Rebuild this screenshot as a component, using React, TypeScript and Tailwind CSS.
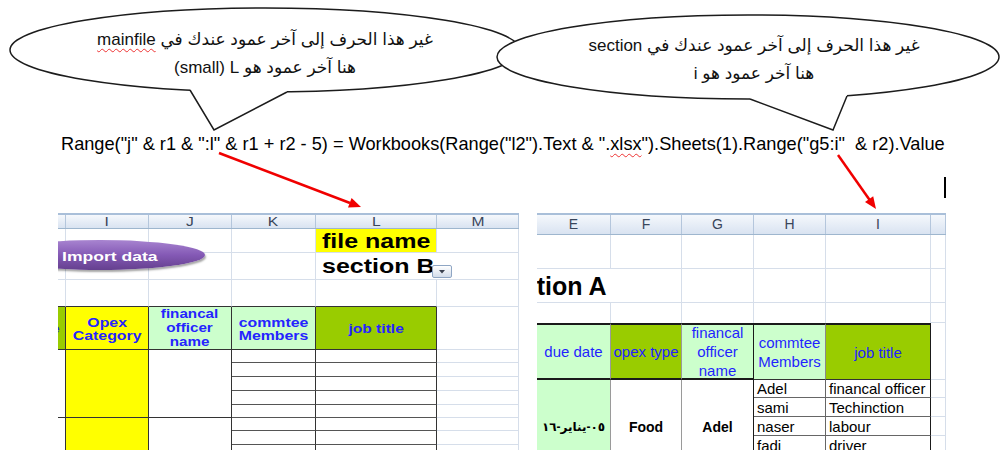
import React from 'react';

const SANS = "font-['Liberation_Sans','DejaVu_Sans',sans-serif]";

function Bubbles() {
  return (
    <svg className="absolute left-0 top-0" width="1000" height="135" viewBox="0 0 1000 135">
      <ellipse cx="265" cy="50" rx="255" ry="42" fill="#fff" stroke="#1c1c1c" strokeWidth="1.5" />
      <polygon points="190,84 190,90 214,130 287,92 287,84" fill="#fff" />
      <polyline points="190,90 214,130 287,92" fill="none" stroke="#1c1c1c" strokeWidth="1.5" />
      <ellipse cx="748" cy="57" rx="251" ry="42" fill="#fff" stroke="#1c1c1c" strokeWidth="1.5" />
      <polygon points="750,92 750,99 833,130 847,96 847,90" fill="#fff" />
      <polyline points="750,99 833,130 847,96" fill="none" stroke="#1c1c1c" strokeWidth="1.5" />
    </svg>
  );
}

function Arrows() {
  return (
    <svg className="pointer-events-none absolute left-0 top-0" width="1000" height="450" viewBox="0 0 1000 450">
      <line x1="219" y1="153" x2="350" y2="203" stroke="#f00000" strokeWidth="2.5" />
      <polygon points="361,207 348,207.4 351.6,198" fill="#f00000" />
      <line x1="838" y1="155" x2="869.5" y2="199.8" stroke="#f00000" strokeWidth="2.5" />
      <polygon points="876,209 865,202.1 873.2,196.3" fill="#f00000" />
    </svg>
  );
}

// left sheet: partial H, I, J, K, L, M
const LW = ['w-[8px]', 'w-[83px]', 'w-[83px]', 'w-[84px]', 'w-[121px]', 'w-[82px]'];
const LETTERS_L = ['', 'I', 'J', 'K', 'L', 'M'];
// right sheet: E, F, G, H, I, partial J
const RW = ['w-[74px]', 'w-[71px]', 'w-[72px]', 'w-[72px]', 'w-[105px]', 'w-[15px]'];
const LETTERS_R = ['E', 'F', 'G', 'H', 'I', ''];

const grid = 'border-r border-b border-[#d6deea]';
const headCell =
  'flex shrink-0 items-center justify-center border-r border-[#b4c6dc] bg-linear-to-b from-[#f5f8fc] to-[#d9e3f1] text-[#39455a]';

function LeftSheet() {
  return (
    <div className={`relative h-[237px] w-[461px] shrink-0 overflow-hidden ${SANS}`}>
      {/* column letters */}
      <div className="flex h-[16px] border-t-2 border-b border-t-[#a9bfd9] border-b-[#9eb6ce]">
        {LW.map((w, i) => (
          <div key={i} className={`${headCell} ${w} text-[12px]`}>
            <span className="inline-block scale-x-[1.3]">{LETTERS_L[i]}</span>
          </div>
        ))}
      </div>

      {/* row 1 */}
      <div className="flex h-[24px]">
        <div className={`${LW[0]} ${grid}`} />
        <div className={`${LW[1]} ${grid}`} />
        <div className={`${LW[2]} ${grid}`} />
        <div className={`${LW[3]} ${grid}`} />
        <div className={`${LW[4]} flex items-center border-r border-b border-[#d6deea] bg-[#ffff00] pl-[6px]`}>
          <span className="inline-block origin-left scale-x-[1.25] whitespace-nowrap text-[20px] font-bold text-black">
            file name
          </span>
        </div>
        <div className={`${LW[5]} ${grid}`} />
      </div>

      {/* row 2 */}
      <div className="flex h-[27px]">
        <div className={`${LW[0]} ${grid}`} />
        <div className={`${LW[1]} ${grid}`} />
        <div className={`${LW[2]} ${grid}`} />
        <div className={`${LW[3]} ${grid}`} />
        <div className={`${LW[4]} flex items-center border-b border-[#d6deea] pl-[6px]`}>
          <span className="inline-block origin-left scale-x-[1.25] whitespace-nowrap text-[20px] font-bold text-black">
            section B
          </span>
        </div>
        <div className={`${LW[5]} ${grid}`} />
      </div>

      {/* row 3 */}
      <div className="flex h-[27px]">
        <div className={`${LW[0]} border-r border-b border-r-[#d6deea] border-b-[#333]`} />
        <div className={`${LW[1]} border-r border-b border-r-[#d6deea] border-b-[#333]`} />
        <div className={`${LW[2]} border-r border-b border-r-[#d6deea] border-b-[#333]`} />
        <div className={`${LW[3]} border-r border-b border-r-[#d6deea] border-b-[#333]`} />
        <div className={`${LW[4]} border-r border-b border-r-[#d6deea] border-b-[#333]`} />
        <div className={`${LW[5]} ${grid}`} />
      </div>

      {/* table header */}
      <div className="flex h-[43px] text-[13px] font-bold leading-[13px] text-[#2424ff]">
        <div className={`${LW[0]} flex items-center overflow-hidden border-r border-b border-[#333] bg-[#99cc00]`}>
          <div className="-ml-[76px] w-[83px] shrink-0 text-center">
            <span className="inline-block scale-x-[1.2] whitespace-nowrap">opex type</span>
          </div>
        </div>
        <div className={`${LW[1]} flex items-center justify-center border-r border-b border-[#333] bg-[#ffff00] pt-[2px]`}>
          <div className="scale-x-[1.22] text-center">
            Opex
            <br />
            Category
          </div>
        </div>
        <div className={`${LW[2]} flex items-center justify-center border-r border-b border-[#333] bg-[#ccffcc] leading-[14px]`}>
          <div className="scale-x-[1.17] text-center">
            financal
            <br />
            officer
            <br />
            name
          </div>
        </div>
        <div className={`${LW[3]} flex items-center justify-center border-r border-b border-[#333] bg-[#ccffcc] pt-[2px]`}>
          <div className="scale-x-[1.22] text-center">
            commtee
            <br />
            Members
          </div>
        </div>
        <div className={`${LW[4]} flex items-center justify-center border-r border-b border-[#333] bg-[#99cc00]`}>
          <div className="scale-x-[1.2] text-center">job title</div>
        </div>
        <div className={`${LW[5]} ${grid}`} />
      </div>

      {/* data groups */}
      {[0, 1].map((g) => (
        <div key={g} className="flex h-[68px]">
          <div className={`${LW[0]} border-r border-b border-[#333]`} />
          <div className={`${LW[1]} border-r border-b border-[#333] bg-[#ffff00]`} />
          <div className={`${LW[2]} border-r border-b border-[#333]`} />
          <div className={`${LW[3]} flex flex-col`}>
            {['h-[13px]', 'h-[14px]', 'h-[14px]', 'h-[14px]', 'h-[13px]'].map((h, i) => (
              <div key={i} className={`${h} border-r border-b border-r-[#333] border-b-[#555]`} />
            ))}
          </div>
          <div className={`${LW[4]} flex flex-col`}>
            {['h-[13px]', 'h-[14px]', 'h-[14px]', 'h-[14px]', 'h-[13px]'].map((h, i) => (
              <div key={i} className={`${h} border-r border-b border-r-[#333] border-b-[#555]`} />
            ))}
          </div>
          <div className={`${LW[5]} flex flex-col`}>
            {['h-[13px]', 'h-[14px]', 'h-[14px]', 'h-[14px]', 'h-[13px]'].map((h, i) => (
              <div key={i} className={`${h} border-r border-b border-[#d6deea]`} />
            ))}
          </div>
        </div>
      ))}

      {/* Import data shape */}
      <div className="absolute left-[-63px] top-[27px] flex h-[30px] w-[210px] items-center rounded-[50%] bg-linear-to-b from-[#a884d0] via-[#8459b5] to-[#65408f] pl-[67px] pt-[3px] shadow-[1px_2px_2px_rgba(0,0,0,0.35)]">
        <span className="inline-block origin-left scale-x-[1.35] whitespace-nowrap text-[13px] font-semibold text-white">
          Import data
        </span>
      </div>

      {/* dropdown button */}
      <div className="absolute left-[374px] top-[52px] flex h-[13px] w-[20px] items-center justify-center rounded-[2px] border border-[#8fa6c4] bg-linear-to-b from-[#ffffff] to-[#d3ddeb]">
        <svg width="6" height="4" viewBox="0 0 6 4">
          <polygon points="0,0 6,0 3,3.5" fill="#3a4150" />
        </svg>
      </div>
    </div>
  );
}

function RightSheet() {
  const dataRows = ['h-[18px]', 'h-[19px]', 'h-[19px]', 'h-[19px]', 'h-[19px]'];
  const names = ['Adel', 'sami', 'naser', 'fadi', ''];
  const jobs = ['financal officer', 'Techinction', 'labour', 'driver', ''];
  return (
    <div className={`relative h-[237px] w-[409px] shrink-0 overflow-hidden ${SANS}`}>
      {/* column letters */}
      <div className="flex h-[22px] border-t-2 border-b border-t-[#a9bfd9] border-b-[#9eb6ce]">
        {RW.map((w, i) => (
          <div key={i} className={`${headCell} ${w} text-[14px]`}>
            {LETTERS_R[i]}
          </div>
        ))}
      </div>

      {/* row 1 */}
      <div className="flex h-[34px]">
        {RW.map((w, i) => (
          <div key={i} className={`${w} ${grid}`} />
        ))}
      </div>

      {/* row 2 : section title spilling from the left */}
      <div className="flex h-[34px]">
        <div className={`${RW[0]} flex items-center border-b border-[#d6deea]`}>
          <span className="-ml-[42px] whitespace-nowrap pt-[2px] text-[25px] font-bold text-black">section A</span>
        </div>
        <div className={`${RW[1]} ${grid}`} />
        <div className={`${RW[2]} ${grid}`} />
        <div className={`${RW[3]} ${grid}`} />
        <div className={`${RW[4]} ${grid}`} />
        <div className={`${RW[5]} ${grid}`} />
      </div>

      {/* row 3 */}
      <div className="flex h-[20px]">
        <div className={`${RW[0]} border-r border-[#d6deea]`} />
        <div className={`${RW[1]} border-r border-[#d6deea]`} />
        <div className={`${RW[2]} border-r border-[#d6deea]`} />
        <div className={`${RW[3]} border-r border-[#d6deea]`} />
        <div className={`${RW[4]} border-r border-[#d6deea]`} />
        <div className={`${RW[5]} ${grid}`} />
      </div>

      {/* table header */}
      <div className="flex h-[57px] text-[15px] leading-[19px] text-[#1f1fff]">
        <div className={`${RW[0]} flex items-center justify-center border-t-2 border-r border-b-2 border-t-[#1a1a1a] border-r-[#9a9a9a] border-b-[#1a1a1a] bg-[#ccffcc]`}>
          due date
        </div>
        <div className={`${RW[1]} flex items-center justify-center whitespace-nowrap border-t-2 border-r border-b-2 border-t-[#1a1a1a] border-r-[#9a9a9a] border-b-[#1a1a1a] bg-[#99cc00]`}>
          opex type
        </div>
        <div className={`${RW[2]} flex items-center justify-center border-t-2 border-r border-b-2 border-t-[#1a1a1a] border-r-[#1a1a1a] border-b-[#1a1a1a] bg-[#ccffcc] text-center`}>
          financal
          <br />
          officer
          <br />
          name
        </div>
        <div className={`${RW[3]} flex items-center justify-center border-t-2 border-r border-b border-t-[#1a1a1a] border-r-[#8a8a8a] border-b-[#333] bg-[#ccffcc] text-center`}>
          commtee
          <br />
          Members
        </div>
        <div className={`${RW[4]} flex items-center justify-center border-t-2 border-r border-b border-t-[#1a1a1a] border-r-[#1a1a1a] border-b-[#333] bg-[#99cc00]`}>
          job title
        </div>
        <div className={`${RW[5]} ${grid}`} />
      </div>

      {/* data */}
      <div className="flex h-[94px] text-[15px] text-black">
        <div className={`${RW[0]} flex items-center justify-center border-r border-[#9a9a9a] bg-[#ccffcc]`}>
          <span className="text-[12px] font-bold">٠٥-يناير-١٦</span>
        </div>
        <div className={`${RW[1]} flex items-center justify-center border-r border-[#9a9a9a] text-[14px] font-bold`}>
          Food
        </div>
        <div className={`${RW[2]} flex items-center justify-center border-r border-[#1a1a1a] text-[14px] font-bold`}>
          Adel
        </div>
        <div className={`${RW[3]} flex flex-col`}>
          {dataRows.map((h, i) => (
            <div key={i} className={`${h} flex items-center border-r border-b border-[#666] pl-[3px] leading-none`}>
              {names[i]}
            </div>
          ))}
        </div>
        <div className={`${RW[4]} flex flex-col`}>
          {dataRows.map((h, i) => (
            <div key={i} className={`${h} flex items-center whitespace-nowrap border-r border-b border-r-[#1a1a1a] border-b-[#666] pl-[3px] leading-none`}>
              {jobs[i]}
            </div>
          ))}
        </div>
        <div className={`${RW[5]} flex flex-col`}>
          {dataRows.map((h, i) => (
            <div key={i} className={`${h} ${grid}`} />
          ))}
        </div>
      </div>
    </div>
  );
}

export default function App() {
  return (
    <div className={`relative h-[450px] w-[1000px] overflow-hidden bg-white text-[#111] ${SANS}`}>
      <Bubbles />

      {/* callout texts */}
      <div className="relative flex h-[128px] text-[17px] leading-[28px]">
        <div dir="rtl" className="w-[530px] pt-[26px] text-center">
          <div>
            غير هذا الحرف إلى آخر عمود عندك في{' '}
            <span className="underline decoration-[#e33] decoration-wavy decoration-1 underline-offset-[3px]">mainfile</span>
          </div>
          <div>
            هنا آخر عمود هو L <bdi dir="ltr">(small)</bdi>
          </div>
        </div>
        <div dir="rtl" className="w-[448px] pt-[32px] text-center">
          <div>غير هذا الحرف إلى آخر عمود عندك في section</div>
          <div>هنا آخر عمود هو i</div>
        </div>
      </div>

      {/* the VBA line */}
      <div className="relative h-[32px] whitespace-nowrap pl-[61px] text-[18.2px] leading-[32px] text-black">
        Range("j" &amp; r1 &amp; ":l" &amp; r1 + r2 - 5) = Workbooks(Range("l2").Text &amp; ".
        <span className="underline decoration-[#e33] decoration-wavy decoration-1 underline-offset-[3px]">xlsx</span>
        ").Sheets(1).Range("g5:i"&nbsp; &amp; r2).Value
      </div>

      {/* the two sheet captures */}
      <div className="mt-[53px] flex gap-[18px] pl-[58px]">
        <LeftSheet />
        <RightSheet />
      </div>

      <Arrows />
      {/* text caret */}
      <div className="absolute left-[944px] top-[177px] h-[21px] w-[2px] bg-black" />
    </div>
  );
}
